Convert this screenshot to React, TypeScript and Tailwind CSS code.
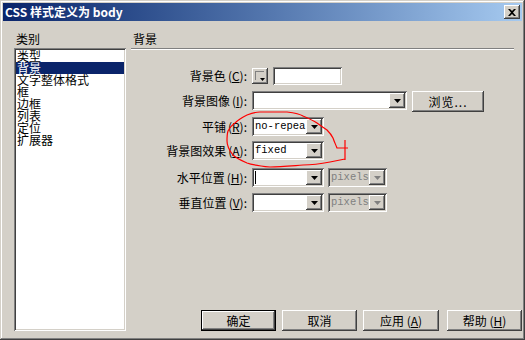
const raised =
  "shadow-[inset_-1px_-1px_0_#404040,inset_1px_1px_0_#ffffff,inset_-2px_-2px_0_#808080,inset_2px_2px_0_#d4d0c8]";
const sunken =
  "shadow-[inset_1px_1px_0_#808080,inset_-1px_-1px_0_#ffffff,inset_2px_2px_0_#404040,inset_-2px_-2px_0_#d4d0c8]";

const categorias = ["类型", "背景", "文字整体格式", "框", "边框", "列表", "定位", "扩展器"];

function Arrow({ gray }: { gray?: boolean }) {
  return (
    <svg width="7" height="4" viewBox="0 0 7 4">
      <polygon points="0,0 7,0 3.5,4" fill={gray ? "#808080" : "#000000"} />
    </svg>
  );
}

function Combo({
  className,
  value,
  disabled,
  cursor,
}: {
  className: string;
  value?: string;
  disabled?: boolean;
  cursor?: boolean;
}) {
  return (
    <div
      className={`relative h-[19px] ${sunken} ${disabled ? "bg-[#d4d0c8]" : "bg-white"} ${className}`}
    >
      {value && (
        <span
          className={`absolute left-[3px] top-[3px] text-[10.5px] leading-[13px] ${disabled ? "text-[#808080]" : "text-black"}`}
          style={{ fontFamily: '"Liberation Mono", "DejaVu Sans Mono", monospace' }}
        >
          {value}
        </span>
      )}
      {cursor && <div className="absolute left-[3px] top-[3px] h-[13px] w-px bg-black" />}
      <div
        className={`absolute right-[2px] top-[2px] flex h-[15px] w-[16px] items-center justify-center bg-[#d4d0c8] ${raised}`}
      >
        <Arrow gray={disabled} />
      </div>
    </div>
  );
}

function Btn({ children, w, def }: { children: React.ReactNode; w: string; def?: boolean }) {
  return (
    <div className={`${w} h-[21px] ${def ? "border border-black" : ""}`}>
      <div className={`flex h-full w-full items-center justify-center bg-[#d4d0c8] text-[12px] text-black ${raised}`}>
        {children}
      </div>
    </div>
  );
}

function Label({ text, k }: { text: string; k: string }) {
  return (
    <div className="w-[116px] text-right text-[12px] leading-[12px] text-black">
      {text}
      <span className="ml-[2px]">
        (<u>{k}</u>):
      </span>
    </div>
  );
}

export default function App() {
  return (
    <div
      className="relative flex h-[340px] w-[525px] flex-col bg-[#d4d0c8] p-[3px] shadow-[inset_-1px_-1px_0_#404040,inset_1px_1px_0_#d4d0c8,inset_-2px_-2px_0_#808080,inset_2px_2px_0_#ffffff]"
      style={{ fontFamily: '"Noto Sans CJK SC", "Liberation Sans", sans-serif' }}
    >
      {/* barra de título */}
      <div className="flex h-[18px] items-center bg-gradient-to-r from-[#0a246a] to-[#a6caf0] pl-[2px] pr-[2px]">
        <span className="text-[12px] font-bold leading-[12px] text-white">CSS 样式定义为 body</span>
        <div className={`ml-auto flex h-[14px] w-[16px] items-center justify-center bg-[#d4d0c8] ${raised}`}>
          <svg width="8" height="7" viewBox="0 0 8 7">
            <path d="M0 0 L2 0 L4 2 L6 0 L8 0 L5 3.5 L8 7 L6 7 L4 5 L2 7 L0 7 L3 3.5 Z" fill="#000" />
          </svg>
        </div>
      </div>

      <div className="flex flex-1 pb-[6px]">
        {/* categorías */}
        <div className="ml-[11px] flex w-[112px] flex-col">
          <div className="mt-[12px] pl-[2px] text-[12px] leading-[12px] text-black">类别</div>
          <div className={`mt-[3px] flex-1 bg-white p-[2px] ${sunken}`}>
            {categorias.map((c, i) => (
              <div
                key={c}
                className={`h-[12px] pl-[1px] text-[12px] leading-[12px] ${i === 1 ? "bg-[#0a246a] text-white" : "text-black"}`}
              >
                {c}
              </div>
            ))}
          </div>
        </div>

        {/* panel derecho */}
        <div className="ml-[5px] flex flex-1 flex-col">
          <div className="mt-[12px] pl-[2px] text-[12px] leading-[12px] text-black">背景</div>
          <div className="mt-[3px] h-[2px] w-[383px] border-t border-b border-t-[#808080] border-b-white" />

          <div className="mt-[16px] flex h-[19px] items-center">
            <Label text="背景色" k="C" />
            <div className={`ml-[5px] relative h-[16px] w-[16px] bg-[#d4d0c8] ${raised}`}>
              <div className="absolute left-[3px] top-[3px] h-[9px] w-[9px] border-l border-t border-[#808080]" />
              <div className="absolute bottom-[3px] right-[3px]">
                <svg width="5" height="3" viewBox="0 0 5 3">
                  <polygon points="0,0 5,0 2.5,3" fill="#000" />
                </svg>
              </div>
            </div>
            <div className={`ml-[5px] h-[18px] w-[69px] bg-white ${sunken}`} />
          </div>

          <div className="mt-[6px] flex h-[21px] items-start">
            <div className="flex h-[19px] items-center">
              <Label text="背景图像" k="I" />
            </div>
            <Combo className="ml-[5px] w-[155px]" />
            <div className="ml-[5px]">
              <Btn w="w-[72px]">
                <span className="tracking-[1px]">浏览...</span>
              </Btn>
            </div>
          </div>

          <div className="mt-[5px] flex h-[19px] items-center">
            <Label text="平铺" k="R" />
            <Combo className="ml-[5px] w-[72px]" value="no-repea" />
          </div>

          <div className="mt-[5px] flex h-[19px] items-center">
            <Label text="背景图效果" k="A" />
            <Combo className="ml-[5px] w-[72px]" value="fixed" />
          </div>

          <div className="mt-[8px] flex h-[19px] items-center">
            <Label text="水平位置" k="H" />
            <Combo className="ml-[5px] w-[72px]" cursor />
            <Combo className="ml-[4px] w-[59px]" value="pixels" disabled />
          </div>

          <div className="mt-[6px] flex h-[19px] items-center">
            <Label text="垂直位置" k="V" />
            <Combo className="ml-[5px] w-[72px]" />
            <Combo className="ml-[4px] w-[59px]" value="pixels" disabled />
          </div>

          <div className="mt-auto flex justify-end gap-[6px]">
            <Btn w="w-[75px]" def>
              确定
            </Btn>
            <Btn w="w-[75px]">取消</Btn>
            <Btn w="w-[76px]">
              应用 (<u>A</u>)
            </Btn>
            <div className="ml-[2px]">
              <Btn w="w-[75px]">
                帮助 (<u>H</u>)
              </Btn>
            </div>
          </div>
        </div>
      </div>

      {/* anotación a mano en rojo */}
      <svg
        className="pointer-events-none absolute left-0 top-0"
        width="525"
        height="340"
        viewBox="0 0 525 340"
      >
        <path
          d="M247 115 C252 113 256 112 260 112 L287 112 C295 113 300 114 303 116 C310 119 314 121 317 123 C321 126 324 128 327 130 C330 133 332 136 333 138 C334 141 335 143 337 148 L348 148 M345 140 L345 160 M345 159 C340 160 335 161 330 162 C320 164 312 165 303 165 C290 166 280 167 270 167 C260 166 252 165 247 163 C240 160 236 158 233 155 C229 150 227 146 227 141 C227 137 227 134 228 131 C230 127 232 125 235 123 C239 119 243 117 247 115"
          fill="none"
          stroke="#ff0000"
          strokeWidth="1.2"
        />
      </svg>
    </div>
  );
}
